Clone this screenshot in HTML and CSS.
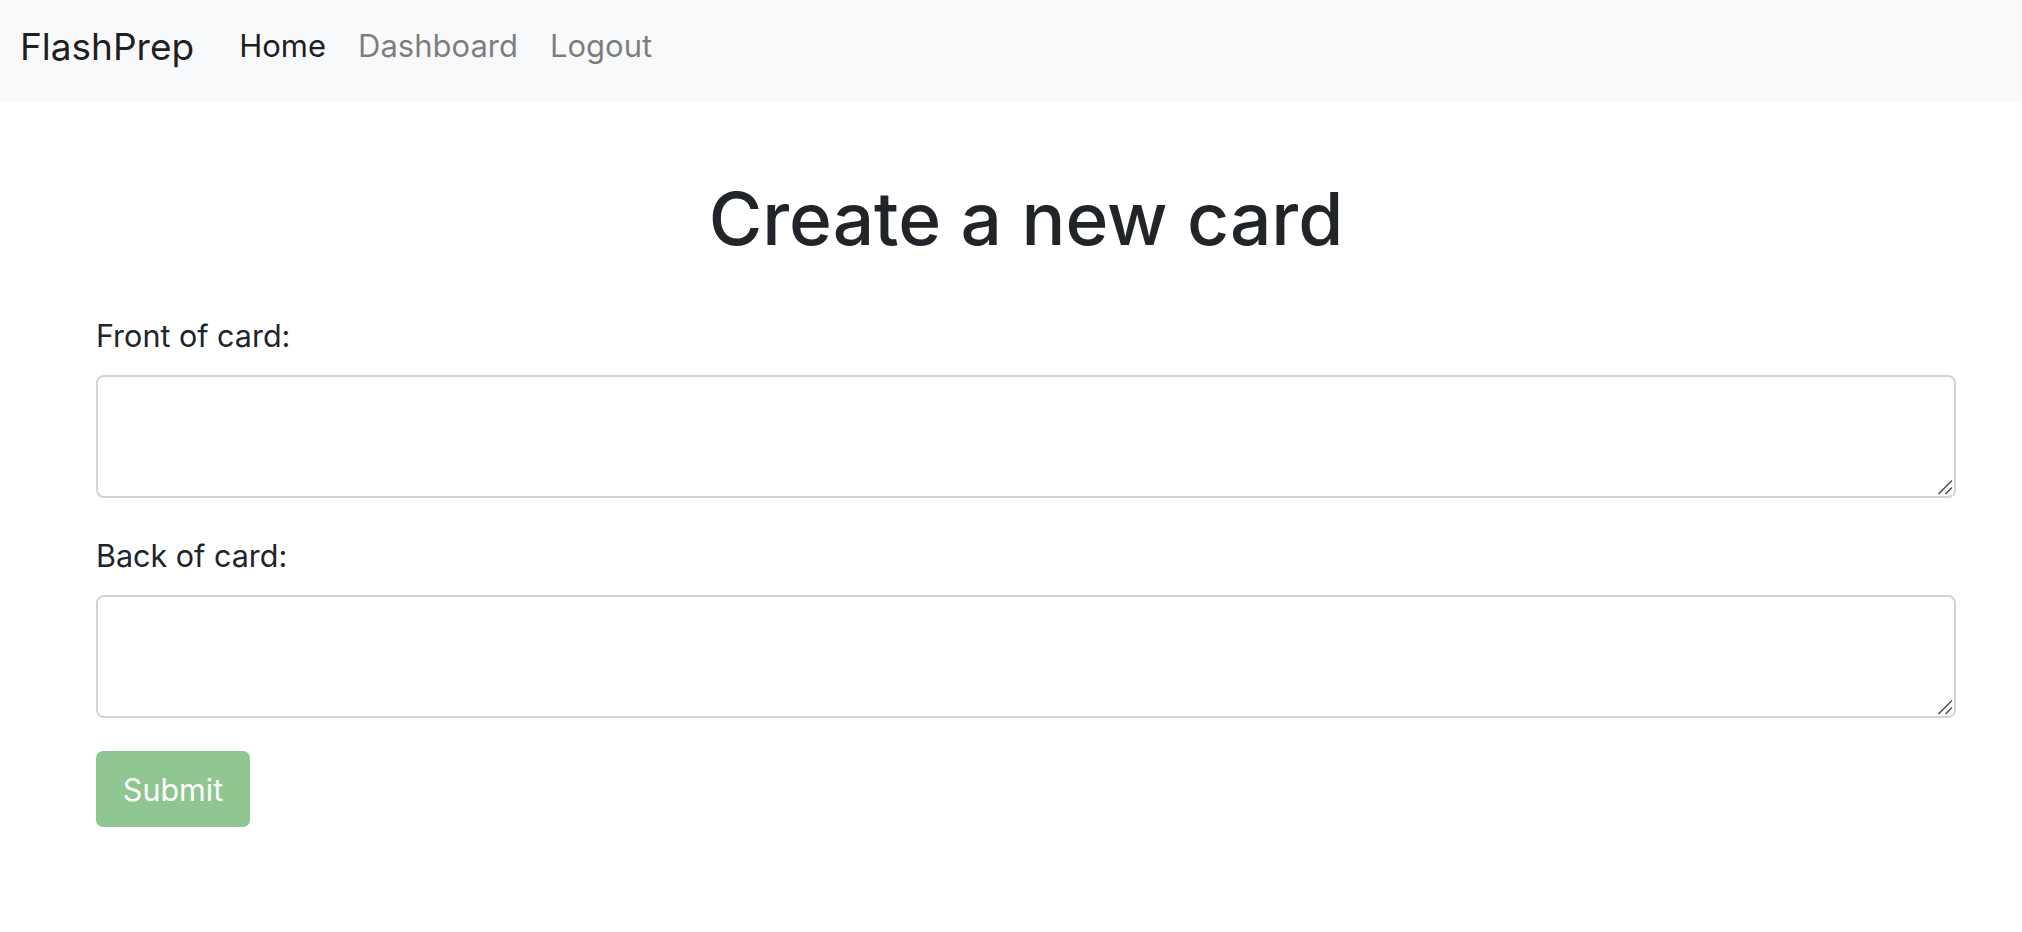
FILE: index.html
```html
<!DOCTYPE html>
<html lang="en">
<head>
<meta charset="utf-8">
<title>FlashPrep</title>
<link rel="stylesheet" href="styles.css">
</head>
<body>
<nav class="navbar">
  <a class="brand" href="#">FlashPrep</a>
  <ul class="nav">
    <li><a class="nav-link active" href="#">Home</a></li>
    <li><a class="nav-link" href="#">Dashboard</a></li>
    <li><a class="nav-link" href="#">Logout</a></li>
  </ul>
</nav>
<main class="container">
  <h1 class="title">Create a new card</h1>
  <form class="card-form">
    <div class="form-group">
      <label class="label" for="front">Front of card:</label>
      <div class="field-wrap">
        <textarea class="field" id="front"></textarea>
        <svg class="grip" viewBox="0 0 16 16" aria-hidden="true"><path d="M1.5 15 L15 1.5 M8.5 15 L15 8.5"/></svg>
      </div>
    </div>
    <div class="form-group">
      <label class="label" for="back">Back of card:</label>
      <div class="field-wrap">
        <textarea class="field" id="back"></textarea>
        <svg class="grip" viewBox="0 0 16 16" aria-hidden="true"><path d="M1.5 15 L15 1.5 M8.5 15 L15 8.5"/></svg>
      </div>
    </div>
    <button class="btn-submit" type="button">Submit</button>
  </form>
</main>
</body>
</html>
```
FILE: styles.css
```css
* { box-sizing: border-box; }
html, body { margin: 0; padding: 0; }
body {
  font-family: Inter, "Liberation Sans", sans-serif;
  color: #212529;
  background: #ffffff;
}
.navbar {
  display: flex;
  align-items: flex-start;
  height: 102px;
  padding: 19px 0 0 20px;
  background: #f8f9fa;
}
.brand {
  font-size: 37px;
  line-height: 56px;
  color: rgba(0, 0, 0, 0.9);
  text-decoration: none;
  margin-right: 29px;
}
.nav {
  display: flex;
  list-style: none;
  margin: 0;
  padding: 4px 0 0 0;
}
.nav-link {
  display: block;
  font-size: 31px;
  line-height: 45px;
  padding: 0 16px;
  color: rgba(0, 0, 0, 0.5);
  text-decoration: none;
}
.nav-link.active { color: rgba(0, 0, 0, 0.9); }
.container {
  padding: 0 66px 0 96px;
}
.title {
  margin: 72px 0 49px;
  text-align: center;
  font-size: 73px;
  line-height: 90px;
  font-weight: 500;
  color: #212529;
}
.form-group { margin-bottom: 35px; }
.label {
  display: block;
  font-size: 30.5px;
  line-height: 45px;
  margin-bottom: 17px;
}
.field-wrap { position: relative; }
.field {
  display: block;
  width: 100%;
  height: 123px;
  border: 2px solid #ced4da;
  border-radius: 8px;
  padding: 12px 20px;
  font-family: inherit;
  font-size: 30px;
  resize: vertical;
  background: #fff;
}
.grip {
  position: absolute;
  right: 3px;
  bottom: 3px;
  width: 16px;
  height: 16px;
  background: #fff;
  pointer-events: none;
}
.grip path {
  stroke: #4a4a4a;
  stroke-width: 1.5;
  fill: none;
}
.btn-submit {
  display: block;
  width: 154px;
  height: 76px;
  margin-top: -2px;
  border: none;
  border-radius: 7px;
  background: #8fc591;
  color: #fff;
  font-family: inherit;
  font-size: 30.5px;
  line-height: 45px;
  padding: 0;
}
```
